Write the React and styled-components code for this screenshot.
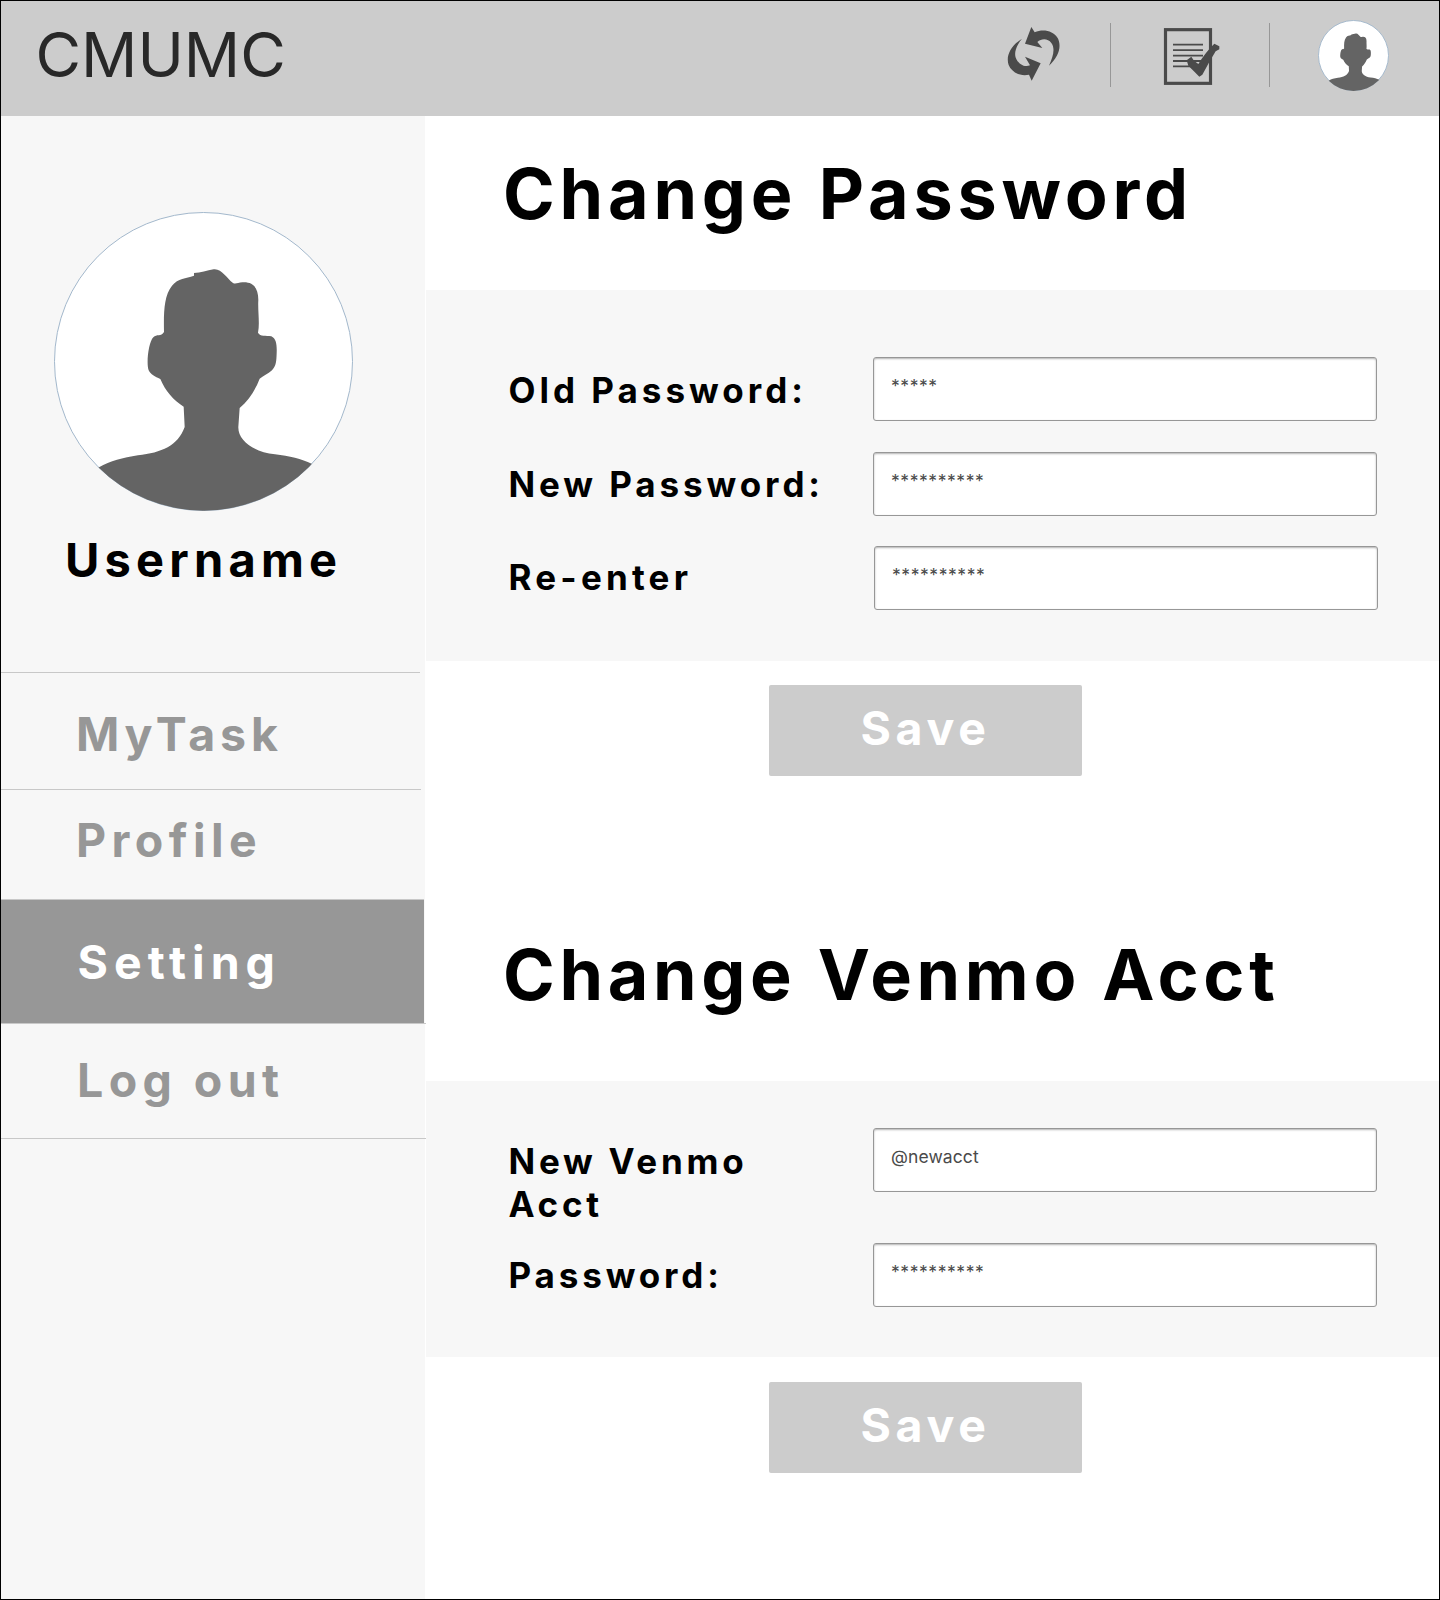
import React from "react";
import styled, { createGlobalStyle } from "styled-components";

const GlobalStyle = createGlobalStyle`
  * { box-sizing: border-box; }
  body { margin: 0; background: #fff; }
`;

const Page = styled.div`
  width: 1440px;
  height: 1600px;
  display: flex;
  flex-direction: column;
  border: 1px solid #000;
  background: #fff;
  overflow: hidden;
  font-family: Inter, "Liberation Sans", sans-serif;
`;

const Header = styled.header`
  height: 115px;
  flex: none;
  display: flex;
  align-items: flex-start;
  justify-content: space-between;
  padding: 0 50px 0 34.5px;
  background: #ccc;
`;

const Brand = styled.div`
  padding-top: 16px;
  font-size: 62.4px;
  line-height: 76px;
  font-weight: 400;
  letter-spacing: 0;
  color: #282828;
`;

const Tools = styled.div`
  display: flex;
`;

const RefreshSvg = styled.svg`
  width: 55px;
  height: 56px;
  margin: 25px 49px 0 0;
`;

const TaskSvg = styled.svg`
  width: 57px;
  height: 59px;
  margin: 26px 49px 0 52px;
`;

const Separator = styled.div`
  width: 1px;
  height: 64px;
  margin-top: 22px;
  background: #979797;
`;

const AvatarSvg = styled.svg`
  display: block;
  flex: none;
  width: ${(p) => p.$size}px;
  height: ${(p) => p.$size}px;
  margin: ${(p) => p.$margin};
`;

const Body = styled.div`
  flex: 1;
  display: flex;
`;

const Sidebar = styled.aside`
  width: 424px;
  flex: none;
  background: #f7f7f7;
`;

const ProfileCard = styled.div`
  height: 556px;
  padding-top: 96px;
`;

const Username = styled.div`
  margin-top: 20px;
  padding-left: 64px;
  font-size: 47px;
  line-height: 58px;
  font-weight: 700;
  letter-spacing: 5.2px;
`;

const Rule = styled.div`
  width: ${(p) => p.$width}px;
  height: 1px;
  background: #c8c8c8;
`;

const MenuItem = styled.a`
  display: block;
  width: ${(p) => (p.$active ? 423 : 424)}px;
  height: ${(p) => p.$height}px;
  padding: ${(p) => p.$top}px 0 0 ${(p) => p.$left}px;
  font-size: 46.5px;
  line-height: 56px;
  font-weight: 700;
  letter-spacing: ${(p) => p.$track}px;
  white-space: nowrap;
  color: ${(p) => (p.$active ? "#fff" : "#979797")};
  background: ${(p) => (p.$active ? "#979797" : "transparent")};
`;

const Main = styled.main`
  flex: 1;
  padding-left: 1px;
`;

const Title = styled.h1`
  margin: 0;
  height: ${(p) => p.$height}px;
  padding: ${(p) => p.$top}px 0 0 77px;
  font-size: 70px;
  line-height: 84px;
  font-weight: 700;
  letter-spacing: ${(p) => p.$track}px;
  white-space: nowrap;
`;

const Panel = styled.section`
  height: ${(p) => p.$height}px;
  padding: ${(p) => p.$top}px 0 0 82px;
  background: #f7f7f7;
`;

const Field = styled.label`
  display: grid;
  grid-template-columns: 365px 504px;
  align-items: start;
  height: ${(p) => p.$height}px;
  padding-left: ${(p) => p.$shift || 0}px;
`;

const FieldName = styled.span`
  width: 330px;
  margin: ${(p) => p.$top}px 0 0 ${(p) => 0.5 - (p.$shift || 0)}px;
  font-size: 35px;
  line-height: 43px;
  font-weight: 700;
  letter-spacing: ${(p) => p.$track || 4}px;
`;

const Input = styled.input`
  width: 504px;
  height: 64px;
  margin: 0;
  padding: 0 17px 8px;
  border: 1px solid #979797;
  border-radius: 3px;
  outline: none;
  background: #fff;
  box-shadow: inset 0 1px 2px rgba(0, 0, 0, 0.3);
  font: 400 17.5px/24px Inter, "Liberation Sans", sans-serif;
  letter-spacing: ${(p) => p.$track}px;
  color: #4a4a4a;
`;

const SaveButton = styled.button`
  display: block;
  width: 313px;
  height: 91px;
  margin: ${(p) => p.$gap}px 0 0 343px;
  padding: 0 0 6px;
  border: 0;
  border-radius: 2px;
  background: #ccc;
  color: #fff;
  font: 700 46.5px/56px Inter, "Liberation Sans", sans-serif;
  letter-spacing: 4.7px;
`;

function RefreshIcon() {
  return (
    <RefreshSvg viewBox="78 78 165 168" fill="#4a4a4a">
      <path d="M154 81 L164 97 C190 86 220 93 233 114 C246 139 236 170 207 197 C220 169 226 145 214 129 C204 115 185 114 172 126 L187 144 L135 131 Z" />
      <path d="M155 242 L147 224 C121 230 95 217 86 195 C77 169 91 138 126 116 C107 139 100 163 110 179 C119 194 134 202 150 196 L135 170 L182 190 Z" />
    </RefreshSvg>
  );
}

function TaskIcon() {
  return (
    <TaskSvg viewBox="549 81 171 177" fill="none" stroke="#4a4a4a">
      <rect x="556.5" y="89" width="135" height="161" strokeWidth="9.5" />
      <path d="M579 134H669M579 150.5H669M579 167H669M579 183H669M579 199H650" strokeWidth="5.5" />
      <path
        fill="#4a4a4a"
        stroke="none"
        d="M620 181 L634 170 L642 182 L655 192 C664 178 678 156 703 131 L718 139 V148 L707 154 L690 182 L667 224 L658 230 L644 216 L625 197 Z"
      />
    </TaskSvg>
  );
}

function Avatar({ size, margin, id, ring }) {
  return (
    <AvatarSvg $size={size} $margin={margin} viewBox="42 36 897 897">
      <clipPath id={id}>
        <circle cx="490.5" cy="484.5" r="447.5" />
      </clipPath>
      <circle cx="490.5" cy="484.5" r={448.5 - ring / 2} fill="#fff" stroke="#a3b8cc" strokeWidth={ring} />
      <path
        clipPath={`url(#${id})`}
        fill="#646464"
        d="M177 802 C211 783 248 773 294 766 C365 758 414 737 434 681 L431 620 C400 600 376 573 361 537 C345 530 332 524 326 511 C318 490 326 425 340 412 C350 401 363 411 372 396 C371 340 371 288 396 257 C415 233 437 237 462 227 V219 C482 218 501 212 521 208 C545 205 560 235 578 248 C588 255 594 245 612 247 C640 247 655 264 655 300 C653 334 660 368 654 398 C661 411 677 405 694 409 C709 416 711 435 710 460 C709 485 709 497 696 511 C684 522 669 528 659 536 C645 572 626 601 599 624 L595 681 C594 722 642 756 705 763 C748 768 785 777 815 791 L939 933 H42 Z"
      />
    </AvatarSvg>
  );
}

export default function App() {
  return (
    <Page>
      <GlobalStyle />
      <Header>
        <Brand>CMUMC</Brand>
        <Tools>
          <RefreshIcon />
          <Separator />
          <TaskIcon />
          <Separator />
          <Avatar id="head-small" size={71} ring={12} margin="19px 0 0 48px" />
        </Tools>
      </Header>
      <Body>
        <Sidebar>
          <ProfileCard>
            <Avatar id="head-large" size={299} ring={3} margin="0 0 0 53px" />
            <Username>Username</Username>
          </ProfileCard>
          <Rule $width={419} />
          <MenuItem $height={116} $top={33} $left={75} $track={4.8}>MyTask</MenuItem>
          <Rule $width={420} />
          <MenuItem $height={109} $top={22} $left={75} $track={5.4}>Profile</MenuItem>
          <Rule $width={423} />
          <MenuItem $active $height={123} $top={34} $left={76.5} $track={6}>Setting</MenuItem>
          <Rule $width={425} />
          <MenuItem $height={114} $top={28} $left={76} $track={5.4}>Log out</MenuItem>
          <Rule $width={425} />
        </Sidebar>
        <Main>
          <Title $height={174} $top={36} $track={4.8}>Change Password</Title>
          <Panel $height={371} $top={67}>
            <Field $height={95}>
              <FieldName $top={12}>Old Password:</FieldName>
              <Input defaultValue="*****" $track={0.57} />
            </Field>
            <Field $height={94}>
              <FieldName $top={11} $track={3.9}>New Password:</FieldName>
              <Input defaultValue="**********" $track={0.57} />
            </Field>
            <Field $height={64} $shift={1}>
              <FieldName $top={10} $shift={1} $track={4.2}>Re-enter</FieldName>
              <Input defaultValue="**********" $track={0.57} />
            </Field>
          </Panel>
          <SaveButton $gap={24}>Save</SaveButton>
          <Title $height={305} $top={157} $track={4.65}>Change Venmo Acct</Title>
          <Panel $height={276} $top={47}>
            <Field $height={115}>
              <FieldName $top={12} $track={3.75}>New Venmo Acct</FieldName>
              <Input defaultValue="@newacct" $track={0.1} />
            </Field>
            <Field $height={64}>
              <FieldName $top={11} $track={3.85}>Password:</FieldName>
              <Input defaultValue="**********" $track={0.57} />
            </Field>
          </Panel>
          <SaveButton $gap={25}>Save</SaveButton>
        </Main>
      </Body>
    </Page>
  );
}
